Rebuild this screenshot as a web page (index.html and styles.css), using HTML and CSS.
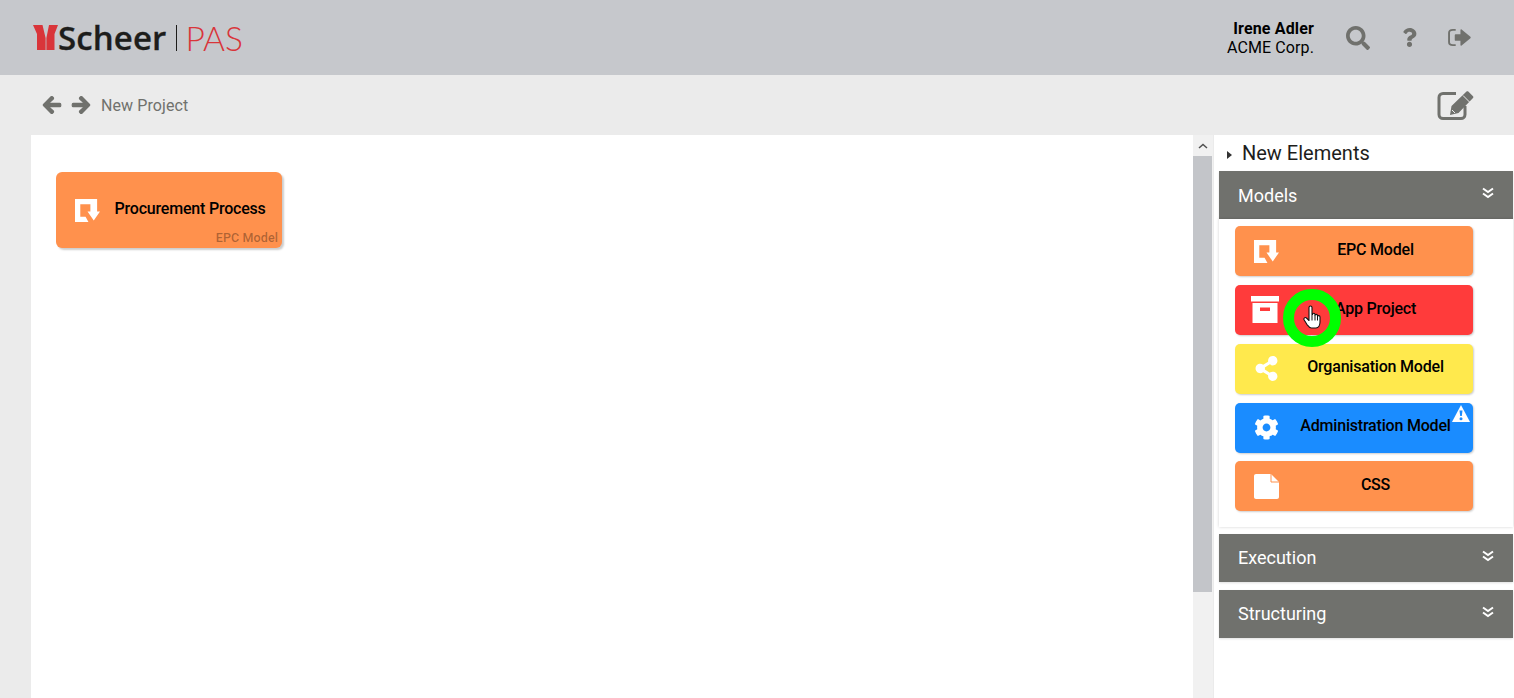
FILE: index.html
```html
<!DOCTYPE html>
<html lang="en">
<head>
<meta charset="utf-8">
<title>Scheer PAS</title>
<link rel="stylesheet" href="styles.css">
</head>
<body>
<svg class="defs" width="0" height="0" aria-hidden="true">
  <symbol id="epc" viewBox="0 0 26 24"><path d="M0 0H23V13H26L19.500 22.500L13 13H16V5.500H5.500V18.500H11L14 24H0Z"/></symbol>
  <symbol id="chev" viewBox="0 0 12 12"><path d="M1 1.500L6 5L11 1.500M1 6.500L6 10L11 6.500" fill="none" stroke="#fff" stroke-width="2"/></symbol>
</svg>
<header class="topbar">
  <div class="logo">
    <svg class="logo-mark" viewBox="0 0 25 25"><path d="M0 0H9.500L12.600 13V25H4V9Z"/><path d="M16 0H25L21.500 9V25H13.400V13Z"/></svg>
    <span class="logo-word">Scheer</span>
    <span class="logo-sep"></span>
    <span class="logo-pas">PAS</span>
  </div>
  <div class="top-right">
    <div class="user"><strong>Irene Adler</strong><span>ACME Corp.</span></div>
    <svg class="ic ic-search" viewBox="0 0 512 512"><path d="M505 442.700L405.300 343c-4.500-4.500-10.600-7-17-7H372c27.600-35.300 44-79.700 44-128C416 93.100 322.900 0 208 0S0 93.100 0 208s93.100 208 208 208c48.300 0 92.700-16.400 128-44v16.300c0 6.400 2.500 12.500 7 17l99.700 99.700c9.400 9.400 24.600 9.400 33.900 0l28.300-28.300c9.400-9.400 9.400-24.600.1-34zM208 336c-70.700 0-128-57.200-128-128 0-70.700 57.200-128 128-128 70.700 0 128 57.200 128 128 0 70.700-57.200 128-128 128z"/></svg>
    <svg class="ic ic-help" viewBox="0 0 384 512"><path d="M202.021 0C122.202 0 70.503 32.703 29.914 91.026c-7.363 10.580-5.093 25.086 5.178 32.874l43.138 32.709c10.373 7.865 25.132 6.026 33.253-4.148 25.049-31.381 43.630-49.449 82.757-49.449 30.764 0 68.816 19.799 68.816 49.631 0 22.552-18.617 34.134-48.993 51.164-35.423 19.860-82.299 44.576-82.299 106.405V320c0 13.255 10.745 24 24 24h72.471c13.255 0 24-10.745 24-24v-5.773c0-42.860 125.268-44.645 125.268-160.627C377.504 66.256 286.902 0 202.021 0zM192 373.459c-38.196 0-69.271 31.075-69.271 69.271 0 38.195 31.075 69.270 69.271 69.270s69.271-31.075 69.271-69.271-31.075-69.270-69.271-69.270z"/></svg>
    <svg class="ic ic-out" viewBox="0 0 24 20"><path class="out-bracket" d="M8 2H5C2.600 2 1 3 1 5V15C1 17 2.600 18 5 18H8"/><path d="M8 6.500H13V2C13 1.300 13.700 1 14.200 1.500L23.500 9.300C24 9.700 24 10.300 23.500 10.700L14.200 18.500C13.700 19 13 18.700 13 18V13.500H8C7.400 13.500 7 13.100 7 12.500V7.500C7 6.900 7.400 6.500 8 6.500Z"/></svg>
  </div>
</header>
<nav class="subbar">
  <svg class="nav-arrow" viewBox="0 0 448 512"><path d="M257.500 445.100l-22.200 22.200c-9.400 9.400-24.600 9.400-33.900 0L7 273c-9.400-9.400-9.400-24.600 0-33.900L201.400 44.700c9.400-9.400 24.600-9.400 33.900 0l22.200 22.200c9.500 9.500 9.300 25-.4 34.300L136.600 216H424c13.300 0 24 10.700 24 24v32c0 13.300-10.700 24-24 24H136.600l120.500 114.800c9.800 9.300 10 24.800.4 34.300z"/></svg>
  <svg class="nav-arrow" viewBox="0 0 448 512"><path d="M190.500 66.900l22.200-22.200c9.400-9.400 24.600-9.400 33.900 0L441 239c9.400 9.400 9.400 24.600 0 33.900L246.600 467.300c-9.400 9.400-24.600 9.400-33.900 0l-22.200-22.200c-9.500-9.500-9.300-25 .4-34.300L311.400 296H24c-13.300 0-24-10.700-24-24v-32c0-13.300 10.700-24 24-24h287.400L190.900 101.200c-9.800-9.300-10-24.800-.4-34.300z"/></svg>
  <span class="crumb">New Project</span>
  <svg class="edit" viewBox="0 0 37 29">
    <path class="edit-frame" d="M19 2.500H6C3.800 2.500 2 4.300 2 6.500V23.500C2 25.700 3.800 27.500 6 27.500H24C26.200 27.500 28 25.700 28 23.500V15"/>
    <path d="M14.500 15L29.500 0.500C30 0 30.800 0 31.300 .5L36 5.300C36.500 5.800 36.500 6.500 36 7L21.500 22L13 24Z"/>
    <path class="edit-gap" d="M26 4.500L32.500 11M15 19L18 22"/>
  </svg>
</nav>
<main class="workspace">
  <section class="canvas">
    <article class="card">
      <svg class="tile-icon"><use href="#epc"/></svg>
      <span class="card-title">Procurement Process</span>
      <span class="card-type">EPC Model</span>
    </article>
  </section>
  <div class="scrollbar">
    <div class="scroll-up"><svg viewBox="0 0 10 6"><path d="M1 5L5 1.500L9 5" fill="none" stroke="#505050" stroke-width="1.500"/></svg></div>
    <div class="scroll-thumb"></div>
  </div>
  <aside class="panel">
    <div class="panel-title"><span class="caret"></span>New Elements</div>
    <div class="acc-head open"><span>Models</span><svg class="chev"><use href="#chev"/></svg></div>
    <div class="acc-body">
      <div class="tile orange"><svg class="tile-icon"><use href="#epc"/></svg><span class="tile-label">EPC Model</span></div>
      <div class="tile red">
        <svg class="tile-icon box" viewBox="0 0 28 27"><path d="M0 0H28V5.500H0ZM1.500 7H26.500V27H1.500ZM9 11.500V15H19V11.500Z" fill-rule="evenodd"/></svg>
        <span class="tile-label">App Project</span>
      </div>
      <div class="tile yellow">
        <svg class="tile-icon" viewBox="0 0 448 512"><path d="M352 320c-22.608 0-43.387 7.819-59.790 20.895l-102.486-64.054a96.551 96.551 0 0 0 0-41.683l102.486-64.054C308.613 184.181 329.392 192 352 192c53.019 0 96-42.981 96-96S405.019 0 352 0s-96 42.981-96 96c0 7.158.79 14.130 2.276 20.841L155.790 180.895C139.387 167.819 118.608 160 96 160c-53.019 0-96 42.981-96 96s42.981 96 96 96c22.608 0 43.387-7.819 59.790-20.895l102.486 64.054A96.301 96.301 0 0 0 256 416c0 53.019 42.981 96 96 96s96-42.981 96-96-42.981-96-96-96z"/></svg>
        <span class="tile-label">Organisation Model</span>
      </div>
      <div class="tile blue">
        <svg class="tile-icon" viewBox="0 0 512 512"><path d="M487.400 315.700l-42.600-24.600c4.300-23.200 4.300-47 0-70.200l42.600-24.600c4.900-2.800 7.100-8.600 5.500-14-11.100-35.600-30-67.800-54.700-94.600-3.800-4.100-10-5.100-14.800-2.300L380.800 110c-17.900-15.400-38.500-27.300-60.800-35.100V25.800c0-5.600-3.900-10.500-9.400-11.700-36.700-8.200-74.300-7.800-109.200 0-5.500 1.200-9.400 6.100-9.400 11.700V75c-22.200 7.900-42.800 19.800-60.800 35.100L88.700 85.500c-4.900-2.800-11-1.900-14.800 2.300-24.700 26.700-43.600 58.900-54.700 94.600-1.700 5.400.6 11.200 5.500 14L67.300 221c-4.300 23.200-4.300 47 0 70.200l-42.600 24.600c-4.900 2.800-7.100 8.600-5.500 14 11.100 35.600 30 67.800 54.700 94.600 3.800 4.100 10 5.100 14.800 2.300l42.600-24.600c17.900 15.400 38.500 27.300 60.800 35.100v49.200c0 5.600 3.900 10.500 9.400 11.700 36.700 8.200 74.300 7.800 109.200 0 5.500-1.200 9.400-6.100 9.400-11.700v-49.200c22.200-7.900 42.800-19.800 60.800-35.100l42.600 24.600c4.900 2.800 11 1.900 14.800-2.300 24.700-26.700 43.600-58.900 54.700-94.600 1.500-5.500-.7-11.300-5.600-14.100zM256 336c-44.100 0-80-35.900-80-80s35.900-80 80-80 80 35.900 80 80-35.900 80-80 80z"/></svg>
        <span class="tile-label">Administration Model</span>
        <svg class="warn" viewBox="0 0 18 17"><path d="M9 0L18 17H0Z" fill="#fff"/><path d="M7.500 5.500H10.500L9.800 11H8.200Z" fill="#1a8cff"/><circle cx="9" cy="13.800" r="1.500" fill="#1a8cff"/></svg>
      </div>
      <div class="tile orange">
        <svg class="tile-icon" viewBox="0 0 25 25"><path d="M2 0H17L25 8V23C25 24.100 24.100 25 23 25H2C.9 25 0 24.100 0 23V2C0 .9.900 0 2 0Z"/><path class="fold" d="M17 0V8H25"/></svg>
        <span class="tile-label">CSS</span>
      </div>
    </div>
    <div class="acc-head"><span>Execution</span><svg class="chev"><use href="#chev"/></svg></div>
    <div class="acc-head"><span>Structuring</span><svg class="chev"><use href="#chev"/></svg></div>
  </aside>
</main>
<div class="click-ring"></div>
<svg class="hand" viewBox="0 0 18 24"><path d="M6 2.500C6 .5 9 .5 9 2.500V9.500L9.500 9.500C9.500 7.800 12 7.800 12 9.500V10.500C12 9 14.500 9 14.500 10.700V11.500C14.500 10.200 17 10.200 17 12V17C17 20 15.500 23 13 23H8.500C6.500 23 5.500 21.500 4 19.500L1.200 15C.2 13.200 2.200 11.800 3.500 13L6 15.500Z" fill="#fff" stroke="#111" stroke-width="1.100" stroke-linejoin="round"/><path d="M9 10V15.500M12 10.500V15.500M14.500 11.500V15.500" fill="none" stroke="#111"/></svg>
</body>
</html>
```
FILE: styles.css
```css
* { box-sizing: border-box; }
html, body { margin: 0; height: 100%; }
body {
  position: relative;
  width: 1514px;
  height: 698px;
  overflow: hidden;
  display: flex;
  flex-direction: column;
  font-family: Roboto, "Liberation Sans", sans-serif;
  background: #ebebeb;
  color: #000;
}
.defs { position: absolute; }

.topbar {
  flex: 0 0 75px;
  display: flex;
  align-items: center;
  justify-content: space-between;
  padding: 0 43px 0 33px;
  background: #c6c8cc;
}
.logo { display: flex; align-items: center; }
.logo-mark { width: 25px; height: 25px; fill: #d9353a; }
.logo-word {
  font-family: "Open Sans", sans-serif;
  font-weight: 600;
  font-size: 33px;
  line-height: 40px;
  letter-spacing: .1px;
  color: #1d1d1b;
  -webkit-text-stroke: .3px #1d1d1b;
}
.logo-sep { width: 1px; height: 26px; margin: 0 8px 0 10px; background: #1d1d1b; }
.logo-pas {
  font-family: Lato, sans-serif;
  font-weight: 300;
  font-size: 33.500px;
  line-height: 40px;
  color: #d9353a;
}
.top-right { display: flex; align-items: center; }
.user {
  display: flex;
  flex-direction: column;
  align-items: flex-end;
  font-size: 16px;
  line-height: 19px;
  margin-right: 32px;
}
.user strong { font-weight: 700; letter-spacing: .15px; }
.user span { letter-spacing: .1px; }
.ic { fill: #70716d; height: 24px; }
.ic-search { width: 24px; margin-right: 32px; }
.ic-help { width: 15px; height: 19px; margin-right: 31px; }
.ic-out { width: 23px; height: 19px; }
.out-bracket { fill: none; stroke: #70716d; stroke-width: 2; }

.subbar {
  flex: 0 0 60px;
  display: flex;
  align-items: center;
  padding: 0 40px 0 43px;
  background: #ebebeb;
}
.nav-arrow {
  width: 18px;
  height: 20px;
  margin-right: 11px;
  fill: #70716d;
  stroke: #70716d;
  stroke-width: 30;
  overflow: visible;
}
.crumb { font-size: 16px; letter-spacing: .1px; color: #70716d; flex: 1; }
.edit { width: 37px; height: 29px; fill: #70716d; }
.edit-frame { fill: none; stroke: #70716d; stroke-width: 3; }
.edit-gap { fill: none; stroke: #ebebeb; stroke-width: 1; }

.workspace { flex: 1; min-height: 0; display: flex; padding-left: 31px; }
.canvas { flex: 1; background: #fff; padding: 37px 25px; }
.card {
  position: relative;
  width: 226px;
  height: 76px;
  display: flex;
  align-items: center;
  padding: 0 0 4px 19px;
  border-radius: 6px;
  background: #ff914d;
  box-shadow: 2px 2px 2px rgba(0, 0, 0, .2);
}
.card-title { margin-left: 14.500px; font-size: 16px; font-weight: 500; letter-spacing: -.2px; }
.card-type {
  position: absolute;
  right: 4px;
  bottom: 3px;
  font-size: 12.500px;
  font-weight: 500;
  letter-spacing: .1px;
  color: rgba(0, 0, 0, .33);
}
.tile-icon { flex: none; width: 25px; height: 25px; fill: #fff; }
.card .tile-icon { margin-top: 4px; }
.fold { fill: none; stroke: #ff914d; stroke-width: 1; }

.scrollbar { flex: 0 0 20px; background: #f1f1f1; }
.scroll-up { height: 21px; display: flex; align-items: center; justify-content: center; }
.scroll-up svg { width: 10px; height: 6px; }
.scroll-thumb { height: 436px; width: 19px; background: #c3c5c9; }

.panel {
  flex: 0 0 301px;
  background: #fff;
  border-left: 1px solid #ebebeb;
  padding-left: 5px;
}
.panel-title {
  height: 36px;
  display: flex;
  align-items: center;
  font-size: 20px;
  color: #1d1d1b;
  margin-left: -5px;
  padding-left: 13px;
}
.caret {
  width: 0;
  height: 0;
  margin-right: 10px;
  margin-top: 4px;
  border-left: 5px solid #333;
  border-top: 4.500px solid transparent;
  border-bottom: 4.500px solid transparent;
}
.acc-head {
  display: flex;
  justify-content: space-between;
  height: 48px;
  width: 294px;
  padding: 0 19px;
  align-items: center;
  background: #70716d;
  color: #fff;
  font-size: 18px;
  box-shadow: 0 1px 2px rgba(0, 0, 0, .12);
  margin-bottom: 8px;
}
.acc-head.open { margin-bottom: 0; }
.acc-head:not(.open) span { padding-bottom: 2px; }
.chev { width: 12px; height: 12px; margin: 0 0 4px 0; fill: none; }
.acc-body {
  width: 294px;
  height: 308px;
  margin-bottom: 7px;
  padding: 7px 16px;
  display: flex;
  flex-direction: column;
  gap: 8.850px;
  background: #fff;
  box-shadow: 0 0 3px rgba(0, 0, 0, .18);
}
.tile {
  position: relative;
  width: 238px;
  height: 50px;
  flex: none;
  display: flex;
  align-items: center;
  padding-left: 19px;
  border-radius: 5px;
  box-shadow: 1px 1px 2px rgba(0, 0, 0, .2);
}
.tile-label {
  flex: 1;
  text-align: center;
  font-size: 16px;
  font-weight: 500;
  letter-spacing: -.2px;
  padding: 0 1px 3.400px 0;
}
.orange { background: #ff914d; }
.red { background: #ff3b3b; }
.yellow { background: #ffe94d; }
.blue { background: #1a8cff; }
.box { width: 28px; height: 27px; margin-left: -3px; }
.warn { position: absolute; top: 2px; right: 3px; width: 18px; height: 17px; }

.click-ring {
  position: absolute;
  left: 1283px;
  top: 289px;
  width: 58px;
  height: 58px;
  border: 11px solid #00ff00;
  border-radius: 50%;
}
.hand { position: absolute; left: 1303px; top: 305px; width: 18px; height: 24px; }
```
